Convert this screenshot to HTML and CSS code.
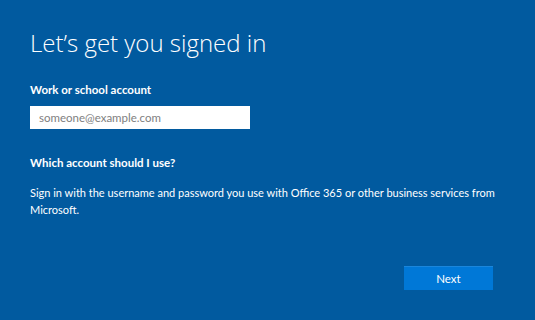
FILE: index.html
```html
<!DOCTYPE html>
<html lang="en">
<head>
    <meta charset="UTF-8">
    <title>Let's get you signed in</title>
    <link rel="stylesheet" href="styles.css">
</head>
<body>
    <div class="page">
        <h1>Let’s get you signed in</h1>
        <label class="label" for="account">Work or school account</label>
        <input class="field" id="account" type="text" placeholder="someone@example.com">
        <h2>Which account should I use?</h2>
        <p>Sign in with the username and password you use with Office 365 or other business services from Microsoft.</p>
        <div class="actions">
            <button class="button">Next</button>
        </div>
    </div>
</body>
</html>
```

FILE: styles.css
```css
body {
    margin: 0;
    background: #015a9f;
    color: white;
    font-family: Lato, sans-serif;
}
.page {
    height: 320px;
    box-sizing: border-box;
    padding: 27px 30px 0 30px;
    display: flex;
    flex-direction: column;
    align-items: flex-start;
}
h1 {
    margin: 0;
    font-family: "Open Sans", sans-serif;
    font-size: 24px;
    font-weight: 300;
    line-height: 32px;
}
.label {
    margin-top: 23px;
    font-size: 11.5px;
    font-weight: bold;
    line-height: 16px;
}
.field {
    margin-top: 8px;
    width: 220px;
    height: 23px;
    box-sizing: border-box;
    border: none;
    padding: 0 9px;
    font-family: Lato, sans-serif;
    font-size: 11.5px;
    outline: none;
}
.field::placeholder {
    color: #808080;
}
h2 {
    margin: 26px 0 0 0;
    font-size: 11.5px;
    font-weight: bold;
    line-height: 16px;
}
p {
    margin: 13px 0 0 0;
    font-size: 11px;
    line-height: 17px;
    max-width: 470px;
}
.actions {
    align-self: stretch;
    display: flex;
    justify-content: flex-end;
    margin-top: 48px;
    padding-right: 12px;
}
.button {
    width: 89px;
    height: 24px;
    background: #0078d7;
    border: none;
    border-top: 1px solid #1a86dc;
    color: white;
    font-family: Lato, sans-serif;
    font-size: 11.5px;
}
```
